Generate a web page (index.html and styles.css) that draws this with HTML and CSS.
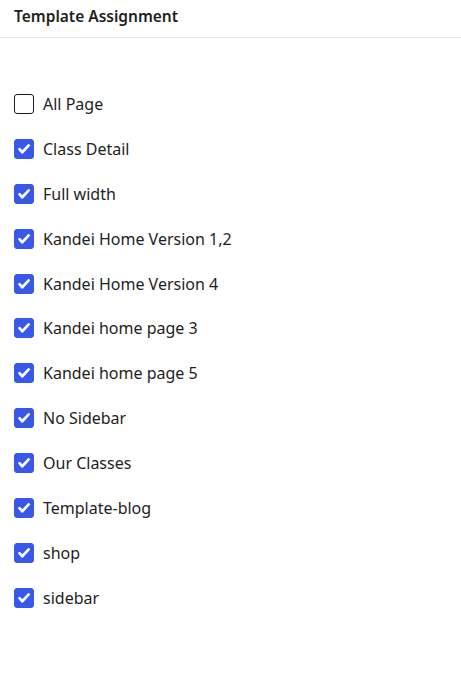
FILE: index.html
```html
<!DOCTYPE html>
<html>
<head>
<meta charset="utf-8">
<link rel="stylesheet" href="styles.css">
</head>
<body>
<div class="panel">
  <div class="header">Template Assignment</div>
  <ul class="list">
    <li class="item"><span class="box"></span><span class="label">All Page</span></li>
    <li class="item"><span class="box checked"><svg viewBox="0 0 20 20"><path d="M5 10.2l3.1 3.4L15.2 6" /></svg></span><span class="label">Class Detail</span></li>
    <li class="item"><span class="box checked"><svg viewBox="0 0 20 20"><path d="M5 10.2l3.1 3.4L15.2 6" /></svg></span><span class="label">Full width</span></li>
    <li class="item"><span class="box checked"><svg viewBox="0 0 20 20"><path d="M5 10.2l3.1 3.4L15.2 6" /></svg></span><span class="label">Kandei Home Version 1,2</span></li>
    <li class="item"><span class="box checked"><svg viewBox="0 0 20 20"><path d="M5 10.2l3.1 3.4L15.2 6" /></svg></span><span class="label">Kandei Home Version 4</span></li>
    <li class="item"><span class="box checked"><svg viewBox="0 0 20 20"><path d="M5 10.2l3.1 3.4L15.2 6" /></svg></span><span class="label">Kandei home page 3</span></li>
    <li class="item"><span class="box checked"><svg viewBox="0 0 20 20"><path d="M5 10.2l3.1 3.4L15.2 6" /></svg></span><span class="label">Kandei home page 5</span></li>
    <li class="item"><span class="box checked"><svg viewBox="0 0 20 20"><path d="M5 10.2l3.1 3.4L15.2 6" /></svg></span><span class="label">No Sidebar</span></li>
    <li class="item"><span class="box checked"><svg viewBox="0 0 20 20"><path d="M5 10.2l3.1 3.4L15.2 6" /></svg></span><span class="label">Our Classes</span></li>
    <li class="item"><span class="box checked"><svg viewBox="0 0 20 20"><path d="M5 10.2l3.1 3.4L15.2 6" /></svg></span><span class="label">Template-blog</span></li>
    <li class="item"><span class="box checked"><svg viewBox="0 0 20 20"><path d="M5 10.2l3.1 3.4L15.2 6" /></svg></span><span class="label">shop</span></li>
    <li class="item"><span class="box checked"><svg viewBox="0 0 20 20"><path d="M5 10.2l3.1 3.4L15.2 6" /></svg></span><span class="label">sidebar</span></li>
  </ul>
</div>
</body>
</html>
```
FILE: styles.css
```css
html, body {
  margin: 0;
  padding: 0;
  background: #fff;
}
body {
  font-family: "Noto Sans", "Open Sans", sans-serif;
  color: #1e1e1e;
}
.panel {
  width: 461px;
}
.header {
  height: 38px;
  box-sizing: border-box;
  padding: 4px 14px 0;
  font-size: 15.5px;
  font-weight: 600;
  line-height: 24px;
  border-bottom: 1px solid #e8e8ec;
}
.list {
  list-style: none;
  margin: 0;
  padding: 56px 14px 0;
  display: flex;
  flex-direction: column;
  gap: 24.9px;
}
.item {
  display: flex;
  align-items: center;
  gap: 9px;
  height: 20px;
}
.box {
  width: 20px;
  height: 20px;
  box-sizing: border-box;
  border: 1.5px solid #1e1e1e;
  border-radius: 3px;
  flex: none;
  display: flex;
}
.box.checked {
  background: #3858e9;
  border-color: #3858e9;
}
.box svg {
  width: 100%;
  height: 100%;
}
.box svg path {
  fill: none;
  stroke: #fff;
  stroke-width: 3;
  stroke-linecap: round;
  stroke-linejoin: round;
}
.label {
  font-size: 16px;
  line-height: 20px;
}
```
